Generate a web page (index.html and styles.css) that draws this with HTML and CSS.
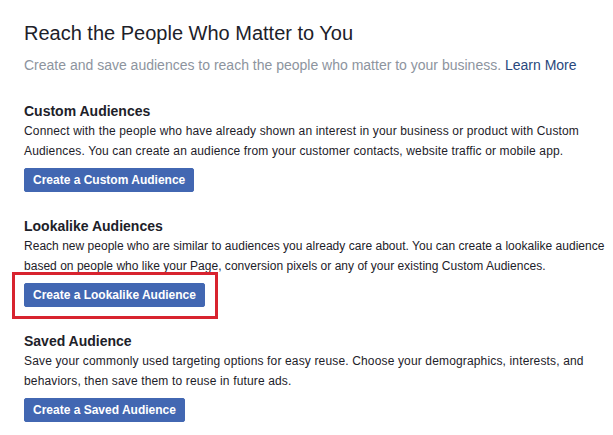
FILE: index.html
```html
<!DOCTYPE html>
<html lang="en">
<head>
<meta charset="utf-8">
<title>Audiences</title>
<link rel="stylesheet" href="styles.css">
</head>
<body>
<main class="page">
  <h1 class="title">Reach the People Who Matter to You</h1>
  <p class="subtitle">Create and save audiences to reach the people who matter to your business. <a class="link" href="#">Learn More</a></p>

  <section class="section">
    <h2 class="section-title">Custom Audiences</h2>
    <p class="section-text">Connect with the people who have already shown an interest in your business or product with Custom<br>Audiences. You can create an audience from your customer contacts, website traffic or mobile app.</p>
    <div class="actions"><button class="btn" type="button">Create a Custom Audience</button></div>
  </section>

  <section class="section">
    <h2 class="section-title">Lookalike Audiences</h2>
    <p class="section-text section-text--tight">Reach new people who are similar to audiences you already care about. You can create a lookalike audience<br>based on people who like your Page, conversion pixels or any of your existing Custom Audiences.</p>
    <div class="actions"><span class="highlight"><button class="btn" type="button">Create a Lookalike Audience</button></span></div>
  </section>

  <section class="section">
    <h2 class="section-title">Saved Audience</h2>
    <p class="section-text">Save your commonly used targeting options for easy reuse. Choose your demographics, interests, and<br>behaviors, then save them to reuse in future ads.</p>
    <div class="actions"><button class="btn" type="button">Create a Saved Audience</button></div>
  </section>
</main>
</body>
</html>
```

FILE: styles.css
```css
html, body {
  margin: 0;
  padding: 0;
  background: #ffffff;
}

body {
  font-family: "Liberation Sans", Arial, Helvetica, sans-serif;
  color: #1d2129;
}

.page {
  padding: 21px 0 0 24px;
}

.title {
  margin: 0 0 11px 0;
  font-size: 20px;
  line-height: 24px;
  font-weight: normal;
  color: #1d2129;
}

.subtitle {
  margin: 0 0 28px 0;
  font-size: 14px;
  line-height: 18px;
  color: #8d949e;
}

.link {
  color: #29487d;
  text-decoration: none;
}

.section {
  margin: 0 0 25px 0;
}

.section-title {
  margin: 0 0 1px 0;
  font-size: 14px;
  line-height: 18px;
  font-weight: bold;
  color: #1d2129;
}

.section-text {
  margin: 0;
  font-size: 12px;
  line-height: 20px;
  letter-spacing: 0.15px;
  white-space: nowrap;
  color: #1d2129;
}

.section-text--tight {
  letter-spacing: 0.02px;
}

.actions {
  margin-top: 7px;
  display: flex;
}

.btn {
  display: inline-block;
  height: 24px;
  margin: 0;
  padding: 0 8px;
  border: 1px solid #4267b2;
  border-radius: 2px;
  background: #4267b2;
  color: #ffffff;
  font-family: "Liberation Sans", Arial, Helvetica, sans-serif;
  font-size: 12px;
  font-weight: bold;
  line-height: 22px;
  white-space: nowrap;
  cursor: pointer;
}

.highlight {
  position: relative;
  display: inline-flex;
}

.highlight::after {
  content: "";
  position: absolute;
  top: -11px;
  left: -12px;
  right: -13px;
  bottom: -12px;
  border: 3px solid #d8232f;
  pointer-events: none;
}
```
